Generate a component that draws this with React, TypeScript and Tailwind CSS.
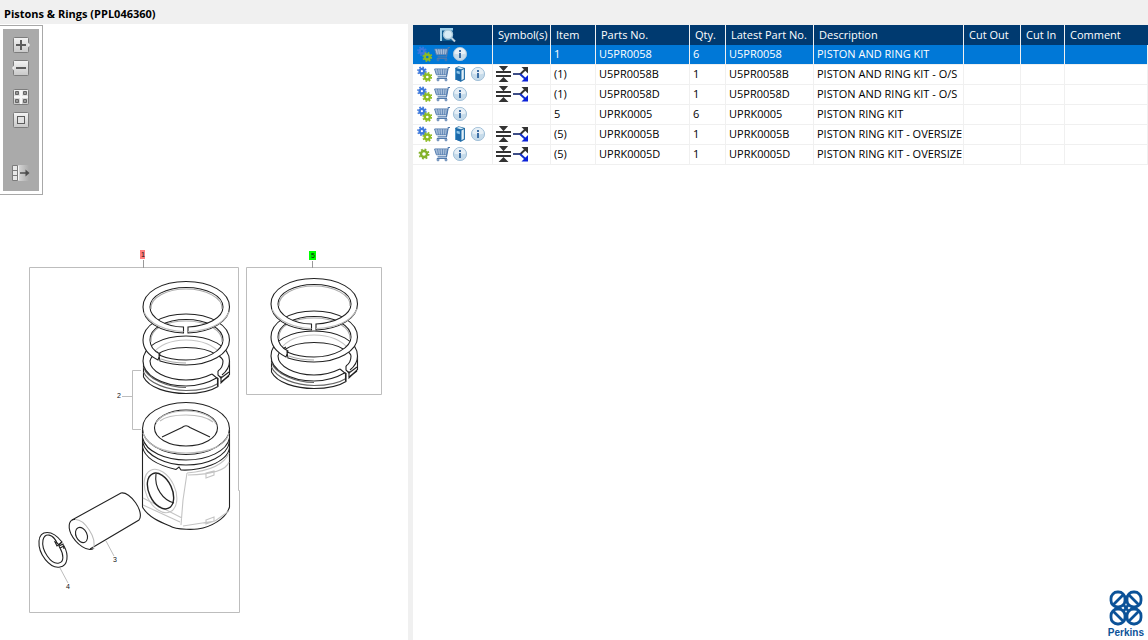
import React from 'react';

const rows = [
  { icons: ['gears', 'cart', 'info'], symbols: false, item: '1', part: 'U5PR0058', qty: '6', desc: 'PISTON AND RING KIT', selected: true },
  { icons: ['gears', 'cart', 'book', 'info'], symbols: true, item: '(1)', part: 'U5PR0058B', qty: '1', desc: 'PISTON AND RING KIT - O/S', selected: false },
  { icons: ['gears', 'cart', 'info'], symbols: true, item: '(1)', part: 'U5PR0058D', qty: '1', desc: 'PISTON AND RING KIT - O/S', selected: false },
  { icons: ['gears', 'cart', 'info'], symbols: false, item: '5', part: 'UPRK0005', qty: '6', desc: 'PISTON RING KIT', selected: false },
  { icons: ['gears', 'cart', 'book', 'info'], symbols: true, item: '(5)', part: 'UPRK0005B', qty: '1', desc: 'PISTON RING KIT - OVERSIZE', selected: false },
  { icons: ['gear', 'cart', 'info'], symbols: true, item: '(5)', part: 'UPRK0005D', qty: '1', desc: 'PISTON RING KIT - OVERSIZE', selected: false },
];

const headings = ['Symbol(s)', 'Item', 'Parts No.', 'Qty.', 'Latest Part No.', 'Description', 'Cut Out', 'Cut In', 'Comment'];

const iconLabels: Record<string, string> = {
  gears: 'Assembly',
  gear: 'Component',
  cart: 'Add to cart',
  book: 'Notes',
  info: 'Information',
};

function Cog({ cx, cy, r, color }: { cx: number; cy: number; r: number; color: string }) {
  const step = ((r + 1.7) * Math.PI) / 8;
  return (
    <g stroke={color} fill="none">
      <circle cx={cx} cy={cy} r={r} strokeWidth="2.4" />
      <circle cx={cx} cy={cy} r={r + 1.7} strokeWidth="1.6" strokeDasharray={`${step} ${step}`} />
    </g>
  );
}

function Icon({ name }: { name: string }) {
  if (name === 'gears')
    return (
      <svg viewBox="0 0 16 16" className="size-4">
        <Cog cx={5.9} cy={5.2} r={2.3} color="#3d78dc" />
        <Cog cx={11.3} cy={11} r={2.5} color="#8dbb22" />
      </svg>
    );
  if (name === 'gear')
    return (
      <svg viewBox="0 0 16 16" className="size-4">
        <Cog cx={8} cy={8} r={3} color="#84b22a" />
      </svg>
    );
  if (name === 'cart')
    return (
      <svg viewBox="0 0 16 16" className="size-4" fill="none" stroke="#4f79ad">
        <path d="M16 1.500H14.300L12.400 10.800H3.600" strokeWidth="1.200" />
        <path d="M.6 3H13.500L12.500 8.800H2.400Z" strokeWidth="1" fill="#dbe5f1" />
        <path d="M3.500 3L4.500 8.800M6 3L6.500 8.800M8.500 3V8.800M11 3L10.500 8.800M1.400 5H13M2 7H12.600" strokeWidth=".7" />
        <path d="M2.800 12.500H13" strokeWidth="1" />
        <circle cx="4" cy="13.900" r="1" />
        <circle cx="12" cy="13.900" r="1" />
      </svg>
    );
  if (name === 'book')
    return (
      <svg viewBox="0 0 16 16" className="size-4">
        <path d="M3 2L6.500 .3L13 2V13.500L9 15.700L3 13.300Z" fill="#2a72a8" />
        <path d="M3 2L9 3.700V15.700L3 13.300Z" fill="#1c6aab" />
        <path d="M9.500 4.500L11.800 3.200V12.800L9.500 14.300Z" fill="#e2f0f8" />
        <path d="M4.500 2L7 1.100L11.500 2.200L9 3.300Z" fill="#dceef8" />
        <path d="M4.600 4.700L7.800 5.600V8.200L4.600 7.200Z" fill="#8cc4e8" />
        <path d="M3.500 2.500V13" stroke="#5aa6d6" strokeWidth=".8" />
      </svg>
    );
  return (
    <svg viewBox="0 0 16 16" className="size-4">
      <circle cx="8" cy="8" r="6.600" fill="#c6dbea" stroke="#a3c1d9" />
      <path d="M2.300 7.500A5.700 5.700 0 0 1 13.700 7.500Q8 9.500 2.300 7.500Z" fill="#e6eff6" />
      <rect x="7" y="4" width="2" height="2" fill="#3d6fa5" />
      <rect x="7" y="7" width="2" height="5" fill="#3d6fa5" />
    </svg>
  );
}

function Symbols() {
  return (
    <svg viewBox="0 0 34 16" className="block h-4 w-[34px]" role="img" aria-label="Thickness, alternative part">
      <path d="M0 6H15M0 10H15" stroke="#333" strokeWidth="1.800" />
      <path d="M2.500 -.5H12.500L7.500 5.200ZM2.500 16H12.500L7.500 11Z" fill="#333" />
      <path d="M17 8H25" stroke="#1d2f72" strokeWidth="1.700" />
      <path d="M24 8.400L30 2.800" stroke="#333" strokeWidth="2" />
      <path d="M24 8L30 13.500" stroke="#1230c8" strokeWidth="2" />
      <path d="M25.500 1H32V7.500Z" fill="#333" />
      <path d="M32 9V15.500H25.500Z" fill="#0b22d8" />
    </svg>
  );
}

function ToolButton({ label, className, children }: { label: string; className: string; children: React.ReactNode }) {
  return (
    <button type="button" aria-label={label} className={`block h-4 w-[18px] ${className}`}>
      <svg viewBox="0 0 18 16" className="block h-4 w-[18px]">
        {children}
      </svg>
    </button>
  );
}

function Toolbar() {
  const box = <rect x="1.5" y=".5" width="15" height="15" rx="1" fill="url(#face)" stroke="#7c7c7c" />;
  return (
    <div className="absolute top-px left-0 border border-l-0 border-[#a8a8a8] bg-white p-[3px]">
      <div className="flex w-9 flex-col items-center bg-[#aaaaaa] pt-2 pb-[10px]">
        <ToolButton label="Zoom in" className="">
          <defs>
            <linearGradient id="face" x1="0" y1="0" x2="0" y2="1">
              <stop offset="0" stopColor="#f4f4f4" />
              <stop offset="1" stopColor="#c8c8c8" />
            </linearGradient>
          </defs>
          {box}
          <path d="M16 5.500L18 8L16 10.500Z" fill="#eee" />
          <path d="M9 3V13M4 8H14" stroke="#5c5c5c" strokeWidth="2" />
        </ToolButton>
        <ToolButton label="Zoom out" className="mt-[7px]">
          {box}
          <path d="M2 5.500L0 8L2 10.500Z" fill="#eee" />
          <path d="M4 8H14" stroke="#5c5c5c" strokeWidth="2" />
        </ToolButton>
        <ToolButton label="Fit all" className="mt-[13px]">
          {box}
          <path d="M9 1V15M2 8H16" stroke="#f8f8f8" strokeWidth="2" />
          <path d="M3.500 2.500h3v3h-3zM11.500 2.500h3v3h-3zM3.500 10.500h3v3h-3zM11.500 10.500h3v3h-3z" fill="#999" stroke="#666" />
        </ToolButton>
        <ToolButton label="Actual size" className="mt-[7px]">
          {box}
          <rect x="5.500" y="4.500" width="7" height="7" fill="#e2e2e2" stroke="#5c5c5c" />
        </ToolButton>
        <ToolButton label="Detach picture" className="mt-[37px]">
          <defs>
            <linearGradient id="fade">
              <stop offset="0" stopColor="#d8d8d8" />
              <stop offset="1" stopColor="#aaaaaa" />
            </linearGradient>
          </defs>
          <path d="M6 0H17V16H6Z" fill="url(#fade)" />
          <path d="M.5 .5H5.500V15.500H.5ZM1 5.500H5M1 10.500H5" fill="#e8e8e8" stroke="#7c7c7c" />
          <path d="M6.500 1V15" stroke="#f5f5f5" />
          <path d="M8 8H15" stroke="#4c4c4c" strokeWidth="1.500" />
          <path d="M13.500 4.500L17.500 8L13.500 11.500Z" fill="#4c4c4c" />
        </ToolButton>
      </div>
    </div>
  );
}

function RingSet({ lift }: { lift: number }) {
  return (
    <g fill="none" stroke="#222" strokeWidth="1.1">
      <g transform={`translate(0 ${-lift})`}>
        <path d="M143.500 361V377C149 388 168 393.500 186 393.500C200 393.500 211 391 218 386.500V378" fill="#fff" />
        <path d="M143.500 372C148 383 168 390.500 186 390.500C202 390.500 211 388 218 383.500M143.500 367C147 379 168 387.500 186 387.500" stroke="#666" />
        <path d="M229.500 361V374.500L221 383V376" fill="#fff" />
        <path d="M217.500 377.500C208 383 198 386 186 386C162 386 143 375 143 361C143 346 162 336 186 336C210 336 229.500 346 229.500 361C229.500 367 227 371 222 375L218 371C221 369 223 365 223 361C223 354 214 347.500 186 347.500C158 347.500 150 355 150 361C150 371 166 380 186 380C196 380 204 378 212 374Z" fill="#fff" stroke="none" />
        <path d="M217.500 377.500C208 383 198 386 186 386C162 386 143 375 143 361C143 346 162 336 186 336C210 336 229.500 346 229.500 361C229.500 367 227 371 222 375" />
        <path d="M212 374C204 378 196 380 186 380C166 380 150 371 150 361C151 357 154 354 158 352M216 354C221 357 223 359 223 361C223 365 221 369 218 371" />
        <path d="M152 355C158 345 171 340 186 340C201 340 215 345 221 355" stroke="#c4c4c4" />
        <path d="M156 355C163 350 174 347.500 186 347.500C198 347.500 210 350 217 355" />
        <path d="M212 374L217.500 378.500V386M218 371V375L221 378L229 372M221 382L229 376" />
      </g>
      <g>
        <path d="M158 360C148 355 143 348 143 340C143 325 162 314 186 314C210 314 229.500 325 229.500 340C229.500 354 210 365 186 365C176 365 168 363.500 160 361L159 355C166 358 176 360 186 360C206 360 223 351 223 340C223 328 206 319.500 186 319.500C166 319.500 150 328 150 340C150 346 154 351 160 354Z" fill="#fff" fillRule="evenodd" />
        <path d="M151 342C149 328 168 321 186 321C206 321 223 330 222 342M161 359C169 362 177 363 186 363" stroke="#aaa" />
      </g>
      <g>
        <path d="M183.500 333C159 332 143 321 143 307C143 292 162 281.500 186 281.500C210 281.500 229.500 292 229.500 307C229.500 321 212 332 188 333V327C207 326 223 318 223 307C223 296 207 287.500 186 287.500C166 287.500 150 296 150 307C150 318 166 327 183.500 327Z" fill="#fff" />
        <path d="M151 309C150 297 168 289 186 289C206 289 223 298 222 309" stroke="#aaa" />
        <path d="M144 312C149 324 166 331 183.500 331.500M188 331.500C208 331 224 324 229 312" stroke="#bbb" />
      </g>
    </g>
  );
}

function Drawing() {
  return (
    <svg viewBox="0 24 408 616" className="block h-[616px] w-[408px]" role="img" aria-label="Exploded view of piston and rings">
      <g fill="none" stroke="#bdbdbd">
        <path d="M29.500 267.500H238.500V490.500H239.500V612.500H29.500ZM246.500 267.500H381.500V394.500H246.500Z" />
        <path d="M143.500 260V268M312.500 261V268" stroke="#999" />
        <path d="M122 396.500H132.500M141 370.500H132.500V429.500H141M106 541L114 556M60 568L68 583" />
      </g>
      <rect x="140" y="250" width="5" height="9" fill="#ff8080" />
      <rect x="309" y="251" width="7" height="9" fill="#00ff00" />
      <g fontFamily="Liberation Sans, sans-serif" fontSize="7" fill="#111">
        <text x="141" y="257">1</text>
        <text x="311" y="258">5</text>
        <text x="117" y="398">2</text>
        <text x="113" y="562">3</text>
        <text x="66" y="589">4</text>
      </g>
      <RingSet lift={0} />
      <g transform="translate(128 -3)">
        <RingSet lift={2} />
      </g>
      <g fill="none" stroke="#222" strokeWidth="1.1">
        <path d="M142.500 430V507C148 517 160 522 170 526C176 530 196 530 203 528C217 524 227 516 229.500 507V430" fill="#fff" />
        <path d="M142.500 447C145 459 161 466 176 469.500L179 467L181 470C200 471 227 463 229.500 448M142.500 442C146 456 166 465 186 465C208 465 227 456 229.500 442M142.500 438C146 452 166 460 186 460C208 460 227 451 229.500 438" />
        <ellipse cx="186" cy="428.500" rx="43.500" ry="26" fill="#fff" />
        <path d="M143 433C147 446 164 453 186 453C208 453 226 446 229 433" stroke="#bbb" />
        <ellipse cx="186" cy="428" rx="31.500" ry="18" />
        <path d="M156 423C160 415 172 411 186 411C200 411 213 416 216 424M160 421C166 416 175 415 186 415C198 415 208 418 213 422" stroke="#bbb" />
        <path d="M162 437L182 427.500Q186 424 190 427.500L210 437" />
        <path d="M187 473L183 500L181 525M187 473Q222 470 229 453M188 475Q225 474 229 462M143 498L182 518M143 505L180 522M183 526L215 521L229 511M206 473L214 471V475L206 478ZM206 520L214 517V521L206 524Z" stroke="#c4c4c4" />
        <ellipse cx="160.500" cy="491" rx="14.500" ry="23" stroke="#c4c4c4" transform="rotate(-25 160.500 491)" />
        <ellipse cx="160.500" cy="491" rx="11.500" ry="19" strokeWidth="1.400" transform="rotate(-25 160.500 491)" />
        <path d="M156 474C154 488 163 500 174 503" />
      </g>
      <g fill="none" stroke="#222" strokeWidth="1.1">
        <path d="M72 520L121 493C130 491 145 512 139 520L90 549" />
        <path d="M94 548C88 553 76 544 71 534C67 525 70 519 75 519.500" />
        <path d="M75 519.500C84 519 98 538 93 549" stroke="#bbb" />
        <ellipse cx="81.500" cy="535" rx="5.500" ry="8" transform="rotate(-25 81.500 535)" />
      </g>
      <g fill="none" stroke="#222" strokeWidth="1.1">
        <path d="M62 542C52 529 40 530 39 541C38 554 50 569 60 567C68 566 69 555 64 546L60 548C64 555 64 562 59 563C51 565 41 550 43 540C45 532 53 534 57 543L59 545Z" />
        <path d="M57 543L55 542L57 546L62 542M60 548L59 546L63 544L64 549" />
      </g>
    </svg>
  );
}

function PerkinsLogo() {
  return (
    <div className="flex flex-col items-center text-[#0b5298]">
      <svg viewBox="0 0 34 36" className="block h-9 w-[34px]" fill="none" stroke="currentColor" strokeWidth="2.800">
        <rect x="2" y="2" width="14" height="15" rx="6.500" />
        <rect x="18" y="2" width="14" height="15" rx="6.500" />
        <rect x="2" y="19" width="14" height="15" rx="6.500" />
        <rect x="18" y="19" width="14" height="15" rx="6.500" />
        <path d="M4 15L15 4M19 4L30 15M4 21L15 32M19 32L30 21M14 14L20 22M20 14L14 22" />
      </svg>
      <span className="font-['Liberation_Sans',sans-serif] text-[10px] leading-[14px] font-bold">Perkins</span>
    </div>
  );
}

export default function App() {
  return (
    <div className="flex min-h-screen flex-col bg-[#f0f0f0] font-['Open_Sans','Noto_Sans',sans-serif] text-[11px] text-black">
      <h1 className="h-6 pl-1 text-[11px] leading-7 font-bold">Pistons &amp; Rings (PPL046360)</h1>
      <main className="flex flex-1">
        <section className="relative shrink-0 bg-white">
          <Drawing />
          <Toolbar />
        </section>
        <section className="ml-[5px] mt-px flex min-w-0 flex-1 flex-col justify-between bg-white">
          <table className="w-full table-fixed border-collapse">
            <colgroup>
              <col className="w-20" />
              <col className="w-[58px]" />
              <col className="w-[45px]" />
              <col className="w-[94px]" />
              <col className="w-9" />
              <col className="w-[88px]" />
              <col className="w-[150px]" />
              <col className="w-[57px]" />
              <col className="w-11" />
              <col />
            </colgroup>
            <thead>
              <tr className="h-5 bg-[#003a70] text-left text-white">
                <th className="p-0 shadow-[inset_-1px_0_0_#f0f0f0]" aria-label="Actions">
                  <svg viewBox="0 0 16 16" className="ml-[27px] block size-4">
                    <path d="M0 1H13V4H2V14H0Z" fill="#9fd0ea" />
                    <path d="M2 3.500H13V14H2Z" fill="#0f5a90" />
                    <circle cx="8" cy="7.500" r="4.500" fill="#d8ecf6" stroke="#a9c8da" strokeWidth="1.400" />
                    <path d="M11.500 11L15 14.500" stroke="#c2d4e0" strokeWidth="2" />
                  </svg>
                </th>
                {headings.map((h) => (
                  <th key={h} className="p-0 pl-[5px] leading-5 font-normal whitespace-nowrap shadow-[inset_-1px_0_0_#f0f0f0] last:shadow-none">
                    {h}
                  </th>
                ))}
              </tr>
            </thead>
            <tbody>
              {rows.map((r) => (
                <tr key={r.part} className={r.selected ? 'h-5 bg-[#0078d7] text-white' : 'h-5 bg-white'}>
                  <td className="p-0 pt-px pl-[3px] align-top shadow-[inset_-1px_-1px_0_#f0f0f0]">
                    <div className="flex gap-0.5">
                      {r.icons.map((name) => (
                        <button key={name} type="button" aria-label={iconLabels[name]}>
                          <Icon name={name} />
                        </button>
                      ))}
                    </div>
                  </td>
                  <td className="p-0 pt-px pl-[3px] align-top shadow-[inset_-1px_-1px_0_#f0f0f0]">{r.symbols && <Symbols />}</td>
                  {[r.item, r.part, r.qty, r.part, r.desc, '', '', ''].map((text, i) => (
                    <td key={i} className="p-0 pl-[3px] align-top leading-[18px] whitespace-nowrap shadow-[inset_-1px_-1px_0_#f0f0f0]">
                      {text}
                    </td>
                  ))}
                </tr>
              ))}
            </tbody>
          </table>
          <div className="self-end pr-1">
            <PerkinsLogo />
          </div>
        </section>
      </main>
    </div>
  );
}
